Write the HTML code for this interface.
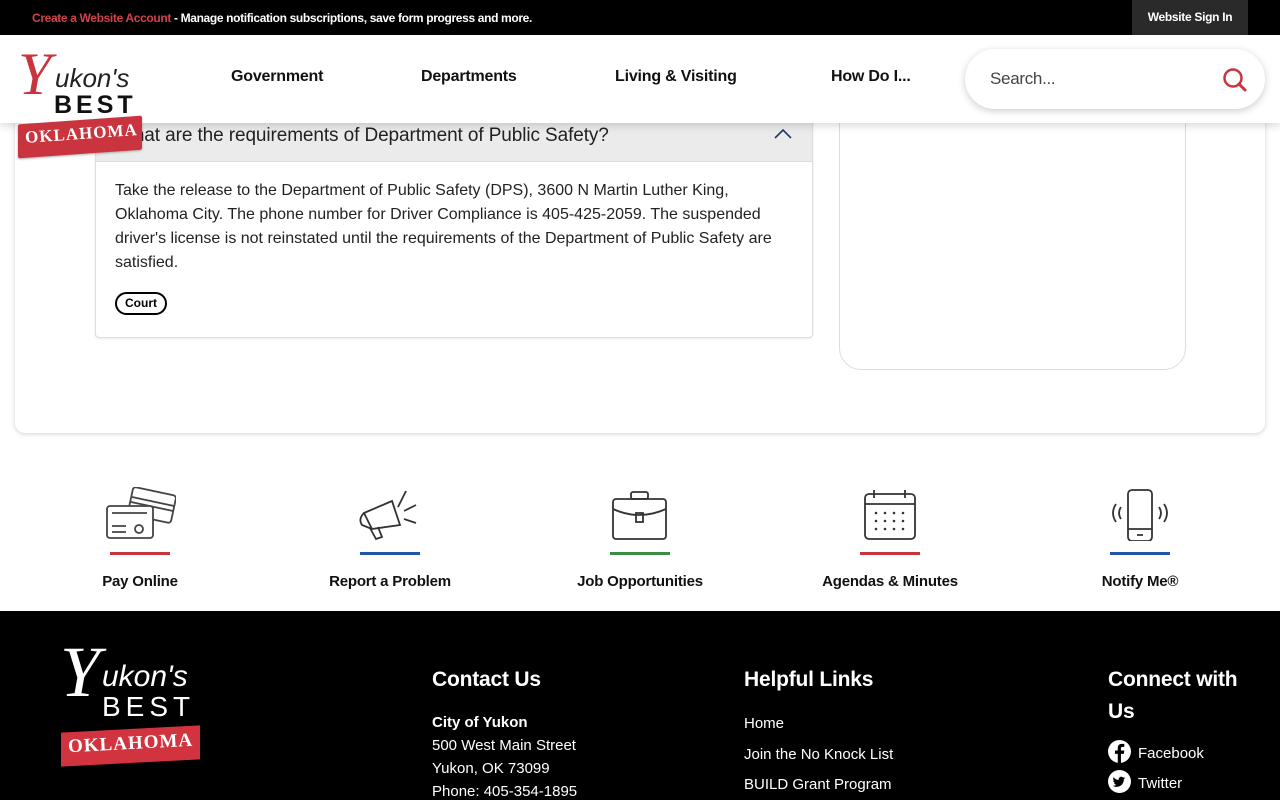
<!DOCTYPE html>
<html><head><meta charset="utf-8"><style>
*{margin:0;padding:0;box-sizing:border-box}
body{width:1280px;height:800px;overflow:hidden;background:#fff;font-family:"Liberation Sans",sans-serif;position:relative}
.top{position:absolute;left:0;top:0;width:1280px;height:35px;background:#000;font-size:12px;font-weight:bold;color:#fff}
.top .msg{position:absolute;left:32px;top:11px;letter-spacing:-0.35px}
.top .msg span{color:#d2414b}
.top .sign{position:absolute;left:1132px;top:0;width:116px;height:35px;background:#2a2a2a;text-align:center;line-height:35px;letter-spacing:-0.3px}
.card{position:absolute;left:15px;top:60px;width:1250px;height:373px;background:#fff;border-radius:10px;box-shadow:0 1px 5px rgba(0,0,0,.18)}
.acc{position:absolute;left:95px;top:100px;width:718px;height:238px;background:#fff;border:1px solid #ddd;border-radius:4px;box-shadow:0 1px 2px rgba(0,0,0,.08)}
.acc .hd{position:absolute;left:0;top:0;width:716px;height:61px;background:#ebebeb;border-bottom:1px solid #ddd}
.acc .hd .t{position:absolute;left:20px;top:24px;font-size:19px;color:#222;letter-spacing:-0.1px}
.acc .body{position:absolute;left:19px;top:78px;width:670px;font-size:16px;line-height:24px;color:#222}
.tag{position:absolute;left:19px;top:191px;width:52px;height:23px;border:2px solid #000;border-radius:12px;font-size:12px;font-weight:bold;text-align:center;line-height:19px}
.side{position:absolute;left:839px;top:90px;width:347px;height:280px;border:1px solid #ddd;border-radius:22px;background:#fff}
.hdr{position:absolute;left:0;top:35px;width:1280px;height:88px;background:#fff;box-shadow:0 3px 8px rgba(0,0,0,.15)}
.nav{position:absolute;top:33px;font-size:16px;font-weight:bold;color:#111;letter-spacing:-0.2px}
.search{position:absolute;left:965px;top:14px;width:300px;height:60px;border-radius:30px;background:#fff;box-shadow:0 2px 8px rgba(0,0,0,.2)}
.search span{position:absolute;left:25px;top:20px;font-size:17px;color:#444;letter-spacing:-0.3px}
.logo{position:absolute;font-weight:bold}
.ql{position:absolute;top:470px;width:200px;text-align:center}
.ql svg{display:block;margin:17px auto 0}
.ql .bar{width:60px;height:3px;margin:11px auto 0}
.ql .lbl{margin-top:18px;font-size:15px;font-weight:bold;color:#111;letter-spacing:-0.2px}
.foot{position:absolute;left:0;top:611px;width:1280px;height:189px;background:#000;color:#fff}
.foot h3{position:absolute;font-size:21px;font-weight:bold;line-height:32px;letter-spacing:-0.2px}
.foot .l{position:absolute;font-size:15px;line-height:23px}
</style></head><body>
<div class="top"><div class="msg"><span>Create a Website Account</span> - Manage notification subscriptions, save form progress and more.</div><div class="sign">Website Sign In</div></div>

<div class="card"></div>
<div class="acc">
 <div class="hd"><div class="t">What are the requirements of Department of Public Safety?</div>
 <svg style="position:absolute;left:678px;top:27px" width="18" height="12" viewBox="0 0 18 12"><path d="M1 10 L9 2 L17 10" fill="none" stroke="#1f3a66" stroke-width="1.6"/></svg></div>
 <div class="body">Take the release to the Department of Public Safety (DPS), 3600 N Martin Luther King, Oklahoma City. The phone number for Driver Compliance is 405-425-2059. The suspended driver's license is not reinstated until the requirements of the Department of Public Safety are satisfied.</div>
 <div class="tag">Court</div>
</div>
<div class="side"></div>

<div class="hdr">
 <div class="nav" style="left:231px">Government</div>
 <div class="nav" style="left:421px">Departments</div>
 <div class="nav" style="left:615px">Living &amp; Visiting</div>
 <div class="nav" style="left:831px">How Do I...</div>
 <div class="search"><span>Search...</span>
  <svg style="position:absolute;left:256px;top:17px" width="28" height="28" viewBox="0 0 28 28"><circle cx="12" cy="12" r="8.5" fill="none" stroke="#c9343f" stroke-width="2.5"/><path d="M18 18 L24 24" stroke="#c9343f" stroke-width="3" stroke-linecap="round"/></svg></div>
</div>
<!-- header logo -->
<div class="logo" style="left:18px;top:50px;width:125px;height:108px">
 <div style="position:absolute;left:0;top:-10px;font-family:'Liberation Serif',serif;font-style:italic;font-size:60px;color:#c9343f;font-weight:normal">Y</div>
 <div style="position:absolute;left:37px;top:13px;font-size:26px;font-style:italic;font-weight:normal;color:#222">ukon's</div>
 <div style="position:absolute;left:36px;top:41px;font-size:25px;letter-spacing:4px;color:#111">BEST</div>
 <div style="position:absolute;left:0;top:70px;width:124px;height:34px;background:#c9343f;transform:skewY(-4deg);border-radius:2px;box-shadow:0 1px 2px rgba(0,0,0,.3)"></div>
 <div style="position:absolute;left:7px;top:74px;font-family:'Liberation Serif',serif;font-size:17px;color:#fff;letter-spacing:1px;transform:rotate(-4deg)">OKLAHOMA</div>
</div>

<div class="ql" style="left:40px"><svg width="72" height="54" viewBox="0 0 72 54" fill="none" stroke="#444" stroke-width="1.8"><rect x="26" y="4" width="44" height="28" rx="3" transform="rotate(12 48 18)"/><path d="M28 10 L70 19 M27 15 L69 24"/><rect x="3" y="19" width="46" height="32" rx="3" fill="#fff"/><path d="M8 26 H43 M8 39 H22 M8 45 H22"/><circle cx="35" cy="42" r="4"/></svg><div class="bar" style="background:#c9343f"></div><div class="lbl">Pay Online</div></div>
<div class="ql" style="left:290px"><svg width="72" height="54" viewBox="0 0 72 54" fill="none" stroke="#333" stroke-width="1.8"><path d="M10 26 L38 14 L46 38 L18 42 Z"/><path d="M10 26 Q4 32 8 38 L18 42"/><path d="M16 41 L22 52 L28 50 L24 40"/><path d="M44 20 L52 4 M50 24 L62 18 M50 32 L62 36"/></svg><div class="bar" style="background:#1f56a8"></div><div class="lbl">Report a Problem</div></div>
<div class="ql" style="left:540px"><svg width="72" height="54" viewBox="0 0 72 54" fill="none" stroke="#333" stroke-width="1.8"><rect x="9" y="12" width="53" height="40" rx="3"/><rect x="27" y="5" width="17" height="7" rx="2"/><path d="M9 22 Q35 34 62 22"/><rect x="32" y="26" width="7" height="9"/></svg><div class="bar" style="background:#3c8c44"></div><div class="lbl">Job Opportunities</div></div>
<div class="ql" style="left:790px"><svg width="72" height="54" viewBox="0 0 72 54" fill="none" stroke="#333" stroke-width="1.8"><rect x="11" y="7" width="50" height="45" rx="4"/><path d="M11 17 H61 M20 3 V11 M51 3 V11"/><g fill="#333" stroke="none"><circle cx="22" cy="26" r="1.3"/><circle cx="31" cy="26" r="1.3"/><circle cx="40" cy="26" r="1.3"/><circle cx="49" cy="26" r="1.3"/><circle cx="22" cy="34" r="1.3"/><circle cx="31" cy="34" r="1.3"/><circle cx="40" cy="34" r="1.3"/><circle cx="49" cy="34" r="1.3"/><circle cx="22" cy="42" r="1.3"/><circle cx="31" cy="42" r="1.3"/><circle cx="40" cy="42" r="1.3"/><circle cx="49" cy="42" r="1.3"/></g></svg><div class="bar" style="background:#c9343f"></div><div class="lbl">Agendas &amp; Minutes</div></div>
<div class="ql" style="left:1040px"><svg width="72" height="54" viewBox="0 0 72 54" fill="none" stroke="#333" stroke-width="1.8"><rect x="24" y="3" width="24" height="51" rx="4"/><path d="M24 42 H48 M33 48 H39 M17 20 Q13 26 17 32 M55 20 Q59 26 55 32 M12 17 Q6 26 12 35 M60 17 Q66 26 60 35"/></svg><div class="bar" style="background:#1f56a8"></div><div class="lbl">Notify Me®</div></div>

<div class="foot">
 <div style="position:absolute;left:60px;top:36px;width:142px;height:125px;font-weight:bold">
  <div style="position:absolute;left:0;top:-16px;font-family:'Liberation Serif',serif;font-style:italic;font-size:72px;color:#fff;font-weight:normal">Y</div>
  <div style="position:absolute;left:42px;top:13px;font-size:30px;font-style:italic;font-weight:normal">ukon's</div>
  <div style="position:absolute;left:42px;top:44px;font-size:28px;letter-spacing:5px;font-weight:normal">BEST</div>
  <div style="position:absolute;left:1px;top:82px;width:139px;height:34px;background:#d2343f;transform:skewY(-3deg)"></div>
  <div style="position:absolute;left:8px;top:86px;font-family:'Liberation Serif',serif;font-size:19px;letter-spacing:1px;transform:rotate(-3deg)">OKLAHOMA</div>
 </div>
 <h3 style="left:432px;top:53px">Contact Us</h3>
 <div class="l" style="left:432px;top:100px"><b>City of Yukon</b><br>500 West Main Street<br>Yukon, OK 73099<br>Phone: 405-354-1895</div>
 <h3 style="left:744px;top:53px">Helpful Links</h3>
 <div class="l" style="left:744px;top:98px;line-height:30.5px">Home<br>Join the No Knock List<br>BUILD Grant Program</div>
 <h3 style="left:1108px;top:53px;width:150px">Connect with Us</h3>
 <div class="l" style="left:1108px;top:128px;line-height:30px">
  <div><svg width="23" height="23" viewBox="0 0 24 24" style="vertical-align:-5px;margin-right:7px"><circle cx="12" cy="12" r="12" fill="#fff"/><path d="M13.5 24 V14.5 H16.5 L17 11 H13.5 V8.8 C13.5 7.8 13.9 7.2 15.2 7.2 H17 V4.2 C16.5 4.1 15.4 4 14.3 4 C11.8 4 10.2 5.5 10.2 8.3 V11 H7.3 V14.5 H10.2 V24 Z" fill="#000"/></svg>Facebook</div>
  <div><svg width="23" height="23" viewBox="0 0 24 24" style="vertical-align:-5px;margin-right:7px"><circle cx="12" cy="12" r="12" fill="#fff"/><path d="M18 8.3 C17.5 8.5 17 8.7 16.5 8.7 C17 8.4 17.4 7.9 17.6 7.3 C17.1 7.6 16.5 7.8 15.9 8 C14.8 6.8 12.9 6.8 11.8 8 C11.2 8.6 11 9.5 11.2 10.3 C9 10.2 7 9.2 5.7 7.5 C5 8.7 5.3 10.3 6.5 11.1 C6.1 11.1 5.7 11 5.3 10.8 C5.3 12.1 6.2 13.2 7.5 13.5 C7.1 13.6 6.7 13.6 6.3 13.5 C6.7 14.6 7.7 15.3 8.8 15.3 C7.7 16.2 6.3 16.6 4.9 16.4 C6.1 17.2 7.6 17.6 9 17.6 C13.9 17.6 16.6 13.5 16.5 9.8 C17.1 9.4 17.6 8.9 18 8.3 Z" fill="#000"/></svg>Twitter</div>
 </div>
</div>
</body></html>
